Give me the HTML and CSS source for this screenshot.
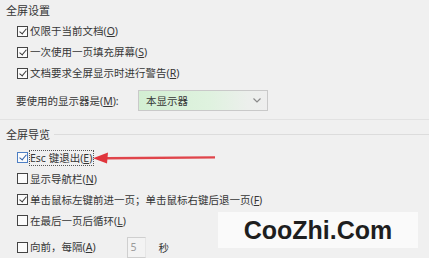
FILE: index.html
```html
<!DOCTYPE html>
<html lang="zh">
<head>
<meta charset="utf-8">
<link rel="stylesheet" href="styles.css">
</head>
<body>
<div class="page">
  <div class="heading h1"><span>全屏设置</span></div>
  <div class="row"><span class="cb checked"></span><span class="lbl">仅限于当前文档(<u>O</u>)</span></div>
  <div class="row"><span class="cb checked"></span><span class="lbl">一次使用一页填充屏幕(<u>S</u>)</span></div>
  <div class="row"><span class="cb checked"></span><span class="lbl">文档要求全屏显示时进行警告(<u>R</u>)</span></div>
  <div class="monitor">
    <span class="mlabel">要使用的显示器是(<u>M</u>):</span>
    <div class="select"><span class="sel-text">本显示器</span>
      <svg class="chev" width="8" height="5" viewBox="0 0 8 5"><path d="M0.5 0.5 L4 4 L7.5 0.5" fill="none" stroke="#8a8a8a" stroke-width="1.2"/></svg>
    </div>
  </div>
  <div class="sep"></div>
  <div class="heading h2"><span>全屏导览</span><span class="hline"></span></div>
  <div class="row esc"><span class="cb checked blue"></span><span class="lbl focus">Esc 键退出(<u>E</u>)</span>
    <svg class="arrow" width="124" height="16" viewBox="0 0 124 16"><path d="M14 7 L122 6.2 L122 8.6 L14 9.6 Z" fill="#e0454b"/><path d="M0 8.2 L15 2.5 L14 13.5 Z" fill="#e0353c"/></svg>
  </div>
  <div class="row"><span class="cb"></span><span class="lbl">显示导航栏(<u>N</u>)</span></div>
  <div class="row"><span class="cb checked"></span><span class="lbl">单击鼠标左键前进一页；单击鼠标右键后退一页(<u>F</u>)</span></div>
  <div class="row"><span class="cb"></span><span class="lbl">在最后一页后循环(<u>L</u>)</span></div>
  <div class="row last"><span class="cb"></span><span class="lbl">向前，每隔(<u>A</u>)</span><span class="spin">5</span><span class="sec">秒</span></div>
  <div class="watermark">CooZhi.Com</div>
</div>
</body>
</html>
```
FILE: styles.css
```css
* { box-sizing: border-box; }
html, body { margin: 0; padding: 0; }
body {
  background: #f0f0f0;
  width: 429px;
  height: 258px;
  overflow: hidden;
  font-family: "Noto Sans", "Noto Sans CJK SC", sans-serif;
  font-size: 10.5px;
  color: #363636;
}
.page { position: relative; display: flex; flex-direction: column; height: 258px; }
u { text-decoration: underline; text-underline-offset: 1px; }
.heading { display: flex; align-items: center; padding-left: 6px; font-size: 11px; }
.h1 { height: 21px; }
.h2 { height: 28px; }
.hline { flex: 1; height: 1px; background: #dcdcdc; margin-left: 4px; margin-top: 2px; }
.row { display: flex; align-items: center; height: 21px; padding-left: 17px; }
.cb {
  width: 11px; height: 11px; border: 1px solid #444; background: #fbfbfb;
  position: relative; flex: none; margin-right: 2px;
}
.cb.checked::after {
  content: ""; position: absolute; left: 2.5px; top: 0px; width: 3px; height: 6px;
  border-right: 1.2px solid #3a3a3a; border-bottom: 1.2px solid #3a3a3a; transform: rotate(40deg);
}
.cb.blue { border-color: #4d7fc4; }
.cb.blue::after { border-color: #2d5ea8; }
.lbl { line-height: 14px; }
.focus { outline: 1px dotted #555; outline-offset: 0; padding: 0 1px 0 0; }
.arrow { flex: none; margin-left: 0; }
.monitor { display: flex; align-items: center; height: 21px; margin-top: 6px; padding-left: 16px; }
.mlabel { width: 122px; }
.select {
  width: 130px; height: 21px; border: 1px solid #c9c9c9;
  background: linear-gradient(to right, #d3efd3 0%, #dff2df 55%, #ecefec 85%, #eeeeee 100%);
  display: flex; align-items: center; justify-content: space-between; padding: 0 6px 0 7px;
}
.chev { flex: none; }
.sep { height: 1px; background: #e2e2e2; margin-top: 8px; }
.last { margin-top: 5px; height: 22px; }
.spin {
  margin-left: 31px; width: 19px; height: 21px; border: 1px solid #cfcfcf; border-right-color: #e6e6e6;
  color: #9a9a9a; padding-left: 3px; display: flex; align-items: center; background: #f3f3f3;
}
.sec { margin-left: 13px; }
.watermark {
  position: absolute; left: 218px; top: 212px; width: 200px; height: 36px;
  background: #fafafa;
  font-family: "Liberation Sans", Arial, sans-serif; font-weight: bold; font-size: 25px;
  color: #1e1e1e; display: flex; align-items: center; justify-content: center;
}
```
